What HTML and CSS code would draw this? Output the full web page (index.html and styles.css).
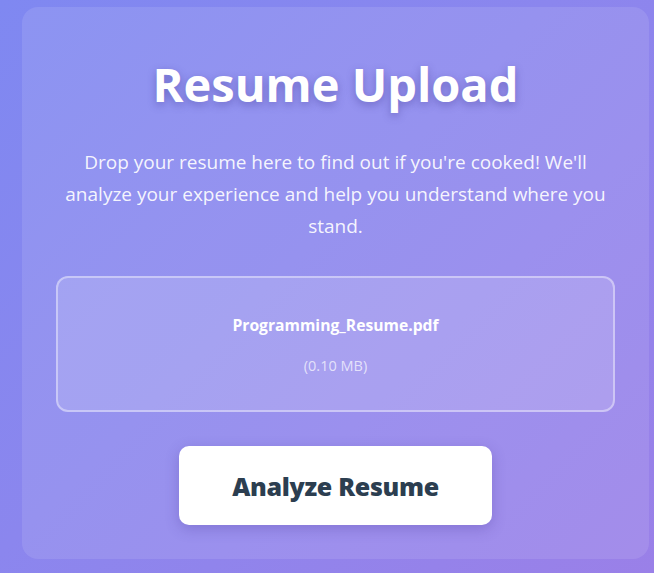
FILE: index.html
```html
<!DOCTYPE html>
<html>
<head>
<meta charset="utf-8">
<link rel="stylesheet" href="styles.css">
</head>
<body>
<div class="page">
  <div class="card">
    <h1 class="title">Resume Upload</h1>
    <p class="subtitle">Drop your resume here to find out if you're cooked! We'll analyze your experience and help you understand where you stand.</p>
    <div class="dropzone">
      <div class="file-name">Programming_Resume.pdf</div>
      <div class="file-size">(0.10 MB)</div>
    </div>
    <button class="analyze">Analyze Resume</button>
  </div>
</div>
</body>
</html>
```
FILE: styles.css
```css
html, body {
  margin: 0;
  padding: 0;
  height: 100%;
}
body {
  background: linear-gradient(135deg, #7f88f1 0%, #8b86ee 45%, #9a80e8 100%);
  font-family: "Open Sans", "Noto Sans", sans-serif;
  overflow: hidden;
}
.page {
  padding: 7px 5px 0 22px;
}
.card {
  box-sizing: border-box;
  height: 552px;
  border-radius: 16px;
  background: rgba(255, 255, 255, 0.1);
  padding: 49px 34px 34px;
  display: flex;
  flex-direction: column;
  align-items: center;
}
.title {
  margin: 0;
  font-size: 47px;
  font-weight: 700;
  line-height: 56px;
  color: #fff;
  text-shadow: 0 3px 8px rgba(60, 50, 140, 0.4);
}
.subtitle {
  margin: 34px 0 0;
  max-width: 545px;
  font-size: 19px;
  line-height: 32px;
  color: rgba(255, 255, 255, 0.92);
  text-align: center;
}
.dropzone {
  box-sizing: border-box;
  align-self: stretch;
  margin-top: 34px;
  height: 136px;
  border: 2px solid rgba(255, 255, 255, 0.4);
  border-radius: 12px;
  background: rgba(255, 255, 255, 0.15);
  display: flex;
  flex-direction: column;
  align-items: center;
  justify-content: center;
  gap: 20px;
}
.file-name {
  font-size: 15.7px;
  font-weight: 700;
  color: #fff;
}
.file-size {
  font-size: 14.5px;
  color: rgba(255, 255, 255, 0.7);
}
.analyze {
  margin-top: 34px;
  width: 313px;
  height: 79px;
  border: none;
  border-radius: 10px;
  background: #fff;
  color: #2c3e50;
  font-family: "Open Sans", "Noto Sans", sans-serif;
  font-size: 25px;
  font-weight: 800;
  letter-spacing: -0.3px;
  box-shadow: 0 4px 14px rgba(60, 40, 140, 0.25);
}
```
